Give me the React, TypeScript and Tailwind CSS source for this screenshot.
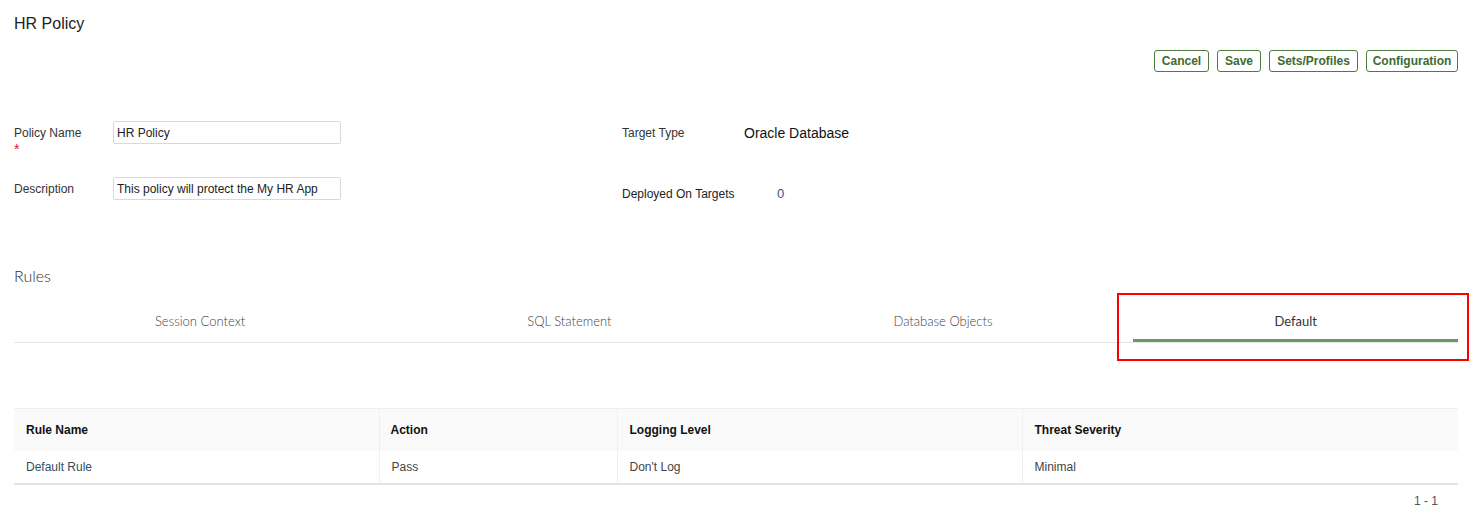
import React from "react";

const buttons = [
  { label: "Cancel", w: "w-[55px]" },
  { label: "Save", w: "w-[44px]" },
  { label: "Sets/Profiles", w: "w-[89px]" },
  { label: "Configuration", w: "w-[92px]" },
];
const tabs = ["Session Context", "SQL Statement", "Database Objects", "Default"];

export default function App() {
  return (
    <div className="relative min-h-[523px] bg-white pl-[14px] pr-[20px] font-['Liberation_Sans',Arial,sans-serif] text-[#333]">
      <h1 className="pt-[14px] text-[16px] leading-[20px] text-[#222]">HR Policy</h1>

      <div className="mt-[16px] flex justify-end gap-[8px]">
        {buttons.map((b) => (
          <button
            key={b.label}
            className={`${b.w} h-[22px] rounded-[3px] border border-[#4c7d3f] bg-white text-center text-[12px] font-bold leading-[20px] text-[#3d6b30]`}
          >
            {b.label}
          </button>
        ))}
      </div>

      <div className="mt-[49px] flex">
        <div className="w-[608px]">
          <div className="flex h-[56px]">
            <div className="w-[99px] pt-[4px] text-[12px] leading-[16px]">
              Policy Name
              <div className="mt-[3px] text-[14px] leading-[10px] text-[#e8102a]">*</div>
            </div>
            <input
              readOnly
              value="HR Policy"
              className="h-[23px] w-[228px] rounded-[2px] border border-[#dcd9d2] px-[3px] text-[12px] text-[#222] outline-none"
            />
          </div>
          <div className="flex">
            <div className="w-[99px] pt-[4px] text-[12px] leading-[16px]">Description</div>
            <input
              readOnly
              value="This policy will protect the My HR App"
              className="h-[23px] w-[228px] rounded-[2px] border border-[#dcd9d2] px-[3px] text-[12px] text-[#222] outline-none"
            />
          </div>
        </div>
        <div>
          <div className="flex h-[65px] items-start pt-[4px]">
            <div className="w-[122px] text-[12px] leading-[16px]">Target Type</div>
            <div className="text-[14px] leading-[16px] text-[#111]">Oracle Database</div>
          </div>
          <div className="flex items-start">
            <div className="w-[155px] text-[12px] leading-[16px] text-[#222]">Deployed On Targets</div>
            <div className="text-[13px] leading-[16px] text-[#2a5d7e]">0</div>
          </div>
        </div>
      </div>

      <h2 className="mt-[64px] font-['Lato',sans-serif] text-[16px] font-light leading-[20px] text-[#333]">
        Rules
      </h2>

      <div className="mt-[14px] flex border-b border-[#e5e5e5] font-['Lato',sans-serif]">
        {tabs.map((t) => {
          const active = t === "Default";
          return (
            <div
              key={t}
              className={
                active
                  ? "flex h-[42px] flex-auto items-center justify-center border-b-[3px] border-[#6b9863] pt-[4px] text-[13px] text-[#333]"
                  : "flex h-[42px] flex-auto items-center justify-center pt-[1px] text-[13px] font-light text-[#444]"
              }
            >
              {t}
            </div>
          );
        })}
      </div>

      <table className="mt-[65px] w-full border-collapse text-[12px]">
        <thead>
          <tr className="h-[42px] border-t border-[#eeeeee] bg-[#fafafa] text-left">
            <th className="w-[365px] border-r border-[#f0f0f0] pl-[12px] font-bold text-[#111]">Rule Name</th>
            <th className="w-[238px] border-r border-[#f0f0f0] pl-[11px] font-bold text-[#111]">Action</th>
            <th className="w-[405px] border-r border-[#f0f0f0] pl-[12px] font-bold text-[#111]">Logging Level</th>
            <th className="pl-[12px] font-bold text-[#111]">Threat Severity</th>
          </tr>
        </thead>
        <tbody>
          <tr className="h-[33px] border-b-2 border-[#e3e3e3]">
            <td className="border-r border-[#f0f0f0] pl-[12px] text-[#2d5066]">Default Rule</td>
            <td className="border-r border-[#f0f0f0] pl-[12px] text-[#444]">Pass</td>
            <td className="border-r border-[#f0f0f0] pl-[12px] text-[#444]">Don't Log</td>
            <td className="pl-[12px] text-[#444]">Minimal</td>
          </tr>
        </tbody>
      </table>

      <div className="mt-[8px] pr-[20px] text-right text-[12px] leading-[16px] text-[#555]">1 - 1</div>

      <div className="pointer-events-none absolute left-[1117px] top-[293px] h-[68px] w-[352px] border-[2px] border-[#ff0000]" />
    </div>
  );
}
